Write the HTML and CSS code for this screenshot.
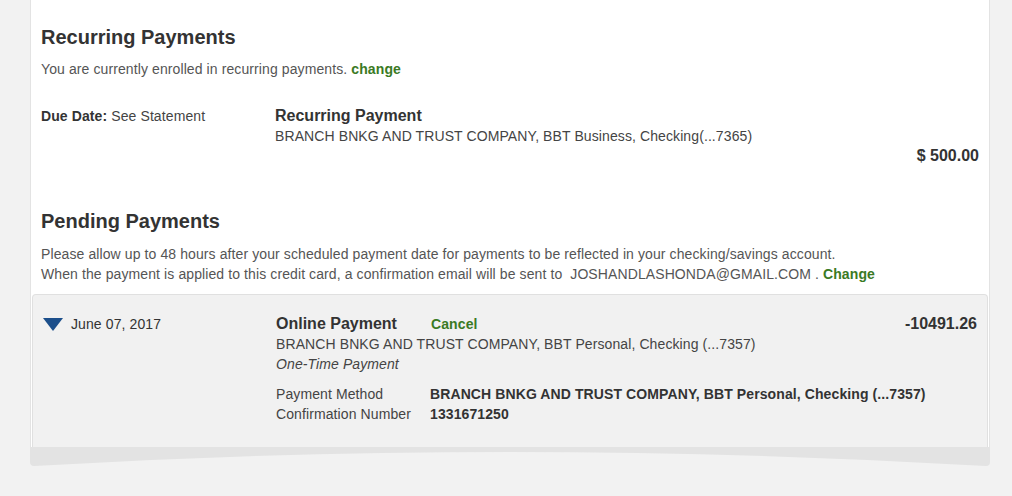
FILE: index.html
```html
<!DOCTYPE html>
<html>
<head>
<meta charset="utf-8">
<link rel="stylesheet" href="styles.css">
</head>
<body>
<div class="panel">
  <section class="sec sec-recurring">
    <h2 class="sec-title">Recurring Payments</h2>
    <p class="note">You are currently enrolled in recurring payments. <a class="link" href="#">change</a></p>
    <div class="rec-row">
      <div class="col-date"><b class="label">Due Date:</b> See Statement</div>
      <div class="col-detail">
        <div class="item-title">Recurring Payment</div>
        <div>BRANCH BNKG AND TRUST COMPANY, BBT Business, Checking(...7365)</div>
      </div>
    </div>
    <div class="amount">$ 500.00</div>
  </section>
  <section class="sec sec-pending">
    <h2 class="sec-title">Pending Payments</h2>
    <p class="note">Please allow up to 48 hours after your scheduled payment date for payments to be reflected in your checking/savings account.<br>When the payment is applied to this credit card, a confirmation email will be sent to &nbsp;JOSHANDLASHONDA@GMAIL.COM . <a class="link" href="#">Change</a></p>
  </section>
  <div class="pending">
    <div class="p-date">
      <svg class="tri" width="20" height="13" viewBox="0 0 20 13"><polygon points="0,0 20,0 10,13" fill="#1c4f8b"/></svg>
      <span>June 07, 2017</span>
    </div>
    <div class="p-detail">
      <div class="p-head"><span class="item-title p-title">Online Payment</span><a class="link" href="#">Cancel</a></div>
      <div>BRANCH BNKG AND TRUST COMPANY, BBT Personal, Checking (...7357)</div>
      <div class="italic">One-Time Payment</div>
      <div class="p-table">
        <div>Payment Method</div><div class="val">BRANCH BNKG AND TRUST COMPANY, BBT Personal, Checking (...7357)</div>
        <div>Confirmation Number</div><div class="val">1331671250</div>
      </div>
    </div>
    <div class="p-amount">-10491.26</div>
  </div>
</div>
<svg class="curl" width="960" height="20" viewBox="0 0 960 20"><path d="M0 0 H960 V15 Q960 19 956 19 Q480 -9 4 19 Q0 19 0 15 Z" fill="#e3e3e3"/></svg>
</body>
</html>
```
FILE: styles.css
```css
html, body {
  margin: 0;
  padding: 0;
  background: #f2f2f2;
}
body {
  font-family: "Liberation Sans", Arial, sans-serif;
  font-size: 14px;
  line-height: 20px;
  letter-spacing: 0.1px;
  color: #444;
}
.panel {
  margin-left: 30px;
  width: 960px;
  box-sizing: border-box;
  background: #fff;
  border-left: 1px solid #e3e3e3;
  border-right: 1px solid #e3e3e3;
  padding-top: 25px;
}
.sec {
  padding: 0 10px;
}
.sec-title {
  margin: 0 0 10px;
  font-size: 20px;
  line-height: 24px;
  font-weight: bold;
  letter-spacing: 0;
  color: #333;
}
.note {
  margin: 0;
  color: #555;
}
.link {
  color: #3a7a24;
  font-weight: bold;
  text-decoration: none;
}
.rec-row {
  margin-top: 27px;
  display: grid;
  grid-template-columns: 234px 1fr;
}
.label {
  color: #333;
}
.item-title {
  font-size: 16px;
  font-weight: bold;
  letter-spacing: 0;
  color: #333;
}
.amount {
  text-align: right;
  font-size: 16px;
  font-weight: bold;
  letter-spacing: 0;
  color: #333;
}
.sec-pending {
  margin-top: 43px;
}
.sec-pending .sec-title {
  margin-bottom: 11px;
}
.pending {
  margin: 10px 1px 0;
  background: #f1f1f1;
  border: 1px solid #e0e0e0;
  border-bottom: none;
  border-radius: 4px 4px 0 0;
  padding: 19px 10px 23px;
  display: grid;
  grid-template-columns: 233px 1fr;
}
.p-date {
  display: flex;
  align-items: flex-start;
  gap: 8px;
  color: #333;
}
.tri {
  display: block;
  margin-top: 4px;
  flex: none;
}
.p-detail {
  grid-column: 2;
  grid-row: 1;
}
.p-head {
  display: flex;
  align-items: baseline;
}
.p-title {
  width: 155px;
}
.italic {
  font-style: italic;
}
.p-table {
  margin-top: 10px;
  display: grid;
  grid-template-columns: 154px 1fr;
}
.val {
  font-weight: bold;
  color: #333;
  white-space: nowrap;
}
.p-amount {
  grid-column: 2;
  grid-row: 1;
  justify-self: end;
  align-self: start;
  font-size: 16px;
  font-weight: bold;
  letter-spacing: 0;
  color: #333;
}
.curl {
  display: block;
  margin-left: 30px;
}
```
